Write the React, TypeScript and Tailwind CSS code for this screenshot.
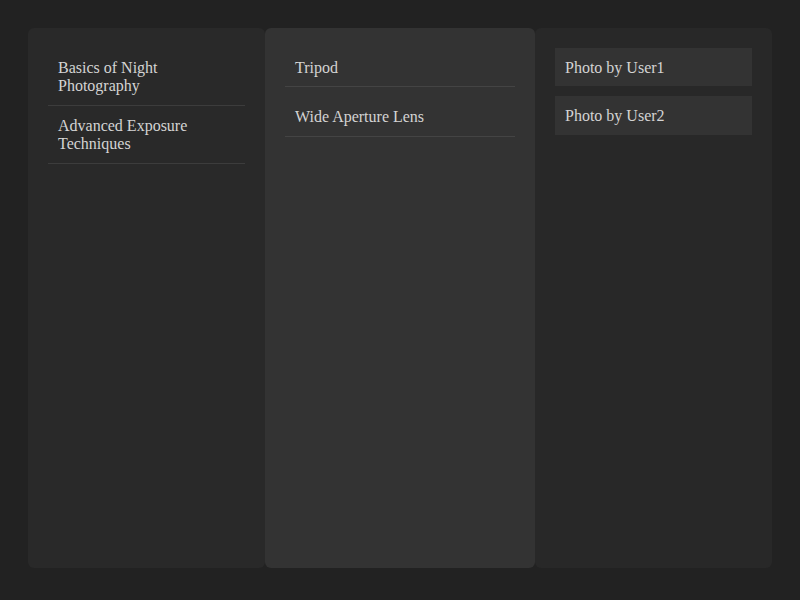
const lessons = ["Basics of Night Photography", "Advanced Exposure Techniques"];
const gear = ["Tripod", "Wide Aperture Lens"];
const photos = ["Photo by User1", "Photo by User2"];

export default function App() {
  return (
    <div className="h-screen bg-[#222222] px-[28px] pb-8 pt-[28px] font-['Liberation_Serif',serif] text-[16px] leading-[1.15] text-[#d4d4d4]">
      <div className="grid h-full grid-cols-[237px_270px_237px]">
        <div className="rounded-md bg-[#292929] p-5">
          {lessons.map((l) => (
            <div key={l} className="border-b border-[#3c3c3c] px-2.5 pb-[9px] pt-[11px]">
              {l}
            </div>
          ))}
        </div>
        <div className="rounded-md bg-[#333333] p-5">
          {gear.map((g) => (
            <div key={g} className="mb-2.5 border-b border-[#444444] px-2.5 pb-[9px] pt-[11px]">
              {g}
            </div>
          ))}
        </div>
        <div className="flex flex-col gap-2.5 rounded-md bg-[#282828] p-5">
          {photos.map((p) => (
            <div key={p} className="bg-[#333333] px-2.5 pb-[9px] pt-[11px]">
              {p}
            </div>
          ))}
        </div>
      </div>
    </div>
  );
}
